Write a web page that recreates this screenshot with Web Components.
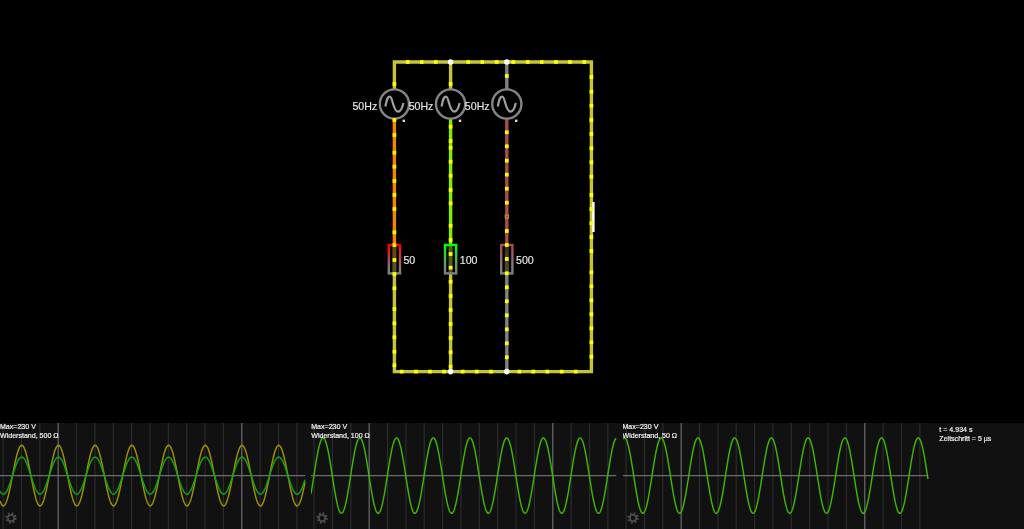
<!DOCTYPE html>
<html lang="de">
<head>
<meta charset="utf-8">
<title>Schaltung</title>
<style>
html,body{margin:0;height:100%;background:#000;overflow:hidden}
body{font-family:"Liberation Sans",Arial,sans-serif;color:#e4e4e4}
</style>
</head>
<body>
<circuit-app>
  <circuit-diagram slot="canvas"></circuit-diagram>
  <scope-view slot="scope" peak="21.7" traces="30.3:#a09200,18.5:#0fa80f">
    <span>Max=230 V</span><span>Widerstand, 500 Ω</span>
  </scope-view>
  <scope-view slot="scope" peak="12.1" traces="37.7:#3cb800">
    <span>Max=230 V</span><span>Widerstand, 100 Ω</span>
  </scope-view>
  <scope-view slot="scope" peak="1.5" traces="37.7:#3cb800">
    <span>Max=230 V</span><span>Widerstand, 50 Ω</span>
  </scope-view>
  <sim-info slot="info"><span>t = 4.934 s</span><span>Zeitschritt = 5 µs</span></sim-info>
</circuit-app>
<script>
class CircuitApp extends HTMLElement{
  constructor(){super();
    this.attachShadow({mode:'open'}).innerHTML=`<style>
      :host{display:flex;flex-direction:column;height:100vh;background:#000}
      .canvas{display:block;flex:1;min-height:0}
      .bar{display:flex;height:106px;background:#111}
    </style>
    <div class="canvas"><slot name="canvas"></slot></div>
    <div class="bar"><slot name="scope"></slot><slot name="info"></slot></div>`;
  }
}
class CircuitDiagram extends HTMLElement{
  constructor(){super();
    const X=[394.4,450.6,506.8],R=591.4,T=62,B=371.6;
    const W='#c4c43c',G='#808080';
    const line=(x1,y1,x2,y2,c,w=3.4)=>`<line x1="${x1}" y1="${y1}" x2="${x2}" y2="${y2}" stroke="${c}" stroke-width="${w}"/>`;
    const dot=(x,y,s=3.7,c='#ff0')=>`<rect x="${x-s/2}" y="${y-s/2}" width="${s}" height="${s}" fill="${c}"/>`;
    let s='';
    s+=`<path d="M${X[0]} 104V${T}H${R}V${B}H${X[0]}V274" fill="none" stroke="${W}" stroke-width="3.4"/>`;
    s+=line(X[1],T,X[1],104,W);
    s+=line(X[2],T,X[2],104,G);
    s+=line(X[0],104,X[0],245,'#ff8000');
    s+=line(X[1],104,X[1],245,'#80f000');
    s+=line(X[2],104,X[2],245,'#a84c4c');
    s+=line(X[1],274,X[1],B,W);
    s+=line(X[2],274,X[2],B,G);
    const res=[['r0','#ff0000','#6a4600'],['r1','#00ff00','#4e6a10'],['r2','#a84c4c','#3e2828']];
    let defs='';
    res.forEach((r,i)=>{
      defs+=`<linearGradient id="${r[0]}" gradientUnits="userSpaceOnUse" x1="0" y1="244" x2="0" y2="274"><stop offset="0.08" stop-color="${r[1]}"/><stop offset="0.85" stop-color="#808080"/></linearGradient>`;
      defs+=`<linearGradient id="${r[0]}i" gradientUnits="userSpaceOnUse" x1="0" y1="244" x2="0" y2="274"><stop offset="0" stop-color="${r[2]}"/><stop offset="1" stop-color="#555530"/></linearGradient>`;
      s+=`<line x1="${X[i]}" y1="245" x2="${X[i]}" y2="274" stroke="url(#${r[0]}i)" stroke-width="4"/>`;
      s+=`<rect x="${X[i]-5.6}" y="245" width="11.2" height="28.4" fill="none" stroke="url(#${r[0]})" stroke-width="2.4"/>`;
    });
    X.forEach(x=>{
      s+=`<circle cx="${x}" cy="104" r="14.6" fill="#000" stroke="#848484" stroke-width="2.4"/>`;
      s+=`<path d="M${x-9} 106.5C${x-7.5} 98 ${x-6.5} 96.6 ${x-4.6} 96.6C${x-1.5} 96.6 ${x-1.5} 111.6 ${x+3.6} 111.6C${x+6} 111.6 ${x+7.5} 110 ${x+9} 103" fill="none" stroke="#a0a0a0" stroke-width="2.2"/>`;
      s+=`<rect x="${x+8.2}" y="119.6" width="2.4" height="2.4" fill="#ddd"/>`;
      s+=`<text x="${x-17.2}" y="109.6" text-anchor="end">50Hz</text>`;
    });
    [['50',403.4],['100',459.8],['500',516]].forEach(l=>{s+=`<text x="${l[1]}" y="264.4">${l[0]}</text>`;});
    s+=`<rect x="592.2" y="202" width="2.4" height="30" fill="#fff"/>`;
    const D=[];
    [407.7,421.7,435.7,468.3,482.3,496.7,513.3,527.7,541.7,556,570,584.3].forEach(x=>D.push([x,T]));
    [401.7,416,430,444,462.7,476.7,491,519.3,533.3,547.3,561.7,575.7].forEach(x=>D.push([x,B]));
    [84,120,135,152.7,166.7,181,195,209,232.3,245,260,274,288.3,309,323.3,337.3,351.7,365.3].forEach(y=>D.push([X[0],y]));
    [84,126.7,141,147.7,161.7,175.7,190,203.3,225.7,240,254,267.7,281.7,296,310,324,338,352.3,366.7].forEach(y=>D.push([X[1],y]));
    [76,132.3,146.3,160.7,174.7,188.7,202.7,231,245,259,273.3,287.3,301.3,315.3,329.3,343.3,357.3].forEach(y=>D.push([X[2],y]));
    [77,91.7,105.7,120,134,148.3,162.3,176.7,195,209,223.3,237,251,272.3,286.3,300.3,314.3,328.3,342.3,356.7].forEach(y=>D.push([R,y]));
    D.forEach(d=>{s+=dot(d[0],d[1]);});
    s+=dot(X[0],218,2.6,'#c8a000')+`<rect x="${X[2]-1.6}" y="215" width="3.2" height="3.2" fill="none" stroke="#b8a020" stroke-width="1"/>`;
    [[X[1],T],[X[2],T],[X[1],B],[X[2],B]].forEach(p=>{s+=`<circle cx="${p[0]}" cy="${p[1]}" r="2.8" fill="#fff"/>`;});
    this.attachShadow({mode:'open'}).innerHTML=`<style>
      :host{display:block;height:423px}
      svg{display:block;filter:blur(.45px)}
      text{font:10.6px "Liberation Sans",Arial,sans-serif;fill:#e8e8e8;stroke:#e8e8e8;stroke-width:.15px}
    </style><svg width="1024" height="423" viewBox="0 0 1024 423"><defs>${defs}</defs>${s}</svg>`;
  }
}
class ScopeView extends HTMLElement{
  constructor(){super();
    const W=305.2,H=106,C=52.6,P=36.72;
    const peak=+this.getAttribute('peak');
    let g='';
    for(let i=0;i<17;i++){
      const x=3.1+i*18.36;
      g+=`<line x1="${x}" y1="0" x2="${x}" y2="${H}" stroke="${(i===3||i===13)?'#6c6c6c':'#2c2c2c'}" stroke-width="1.2"/>`;
    }
    g+=`<line x1="0" y1="${C}" x2="${W}" y2="${C}" stroke="#6c6c6c" stroke-width="1.2"/>`;
    this.getAttribute('traces').split(',').forEach(t=>{
      const [a,c]=t.split(':');let d='';
      for(let x=0;x<=W;x+=0.5){
        const y=C-(+a)*Math.cos((x-peak)/P*2*Math.PI);
        d+=(x?'L':'M')+x.toFixed(1)+' '+y.toFixed(2);
      }
      g+=`<path d="${d}" fill="none" stroke="${c}" stroke-width="1.45"/>`;
    });
    this.attachShadow({mode:'open'}).innerHTML=`<style>
      :host{display:block;position:relative;flex:0 0 311.25px;height:106px;overflow:hidden;
        font:7.05px/9px "Liberation Sans",Arial,sans-serif;color:#f0f0f0;-webkit-text-stroke:.2px #f0f0f0}
      svg{display:block;filter:blur(.4px)}
      .label{position:absolute;left:0;top:-1px;display:flex;flex-direction:column;filter:blur(.3px);white-space:nowrap}
      ::slotted(span){display:block}
      .gear{position:absolute;left:4.7px;top:89.3px}
    </style>
    <svg width="311.25" height="106" viewBox="0 0 311.25 106">${g}</svg>
    <div class="label"><slot></slot></div>
    <svg class="gear" width="12" height="12" viewBox="0 0 12 12" fill="none" stroke="#4c4c4c">
      <circle cx="6" cy="6" r="3.2" stroke-width="1.8"/>
      <circle cx="6" cy="6" r="4.8" stroke-width="1.8" stroke-dasharray="1.88 1.89"/>
    </svg>`;
  }
}
class SimInfo extends HTMLElement{
  constructor(){super();
    this.attachShadow({mode:'open'}).innerHTML=`<style>
      :host{display:flex;flex-direction:column;flex:1;padding:2px 0 0 5.6px;
        font:7.05px/9px "Liberation Sans",Arial,sans-serif;color:#f0f0f0;-webkit-text-stroke:.2px #f0f0f0;filter:blur(.3px);white-space:nowrap}
      ::slotted(span){display:block}
    </style><slot></slot>`;
  }
}
customElements.define('circuit-app',CircuitApp);
customElements.define('circuit-diagram',CircuitDiagram);
customElements.define('scope-view',ScopeView);
customElements.define('sim-info',SimInfo);
</script>
</body>
</html>
